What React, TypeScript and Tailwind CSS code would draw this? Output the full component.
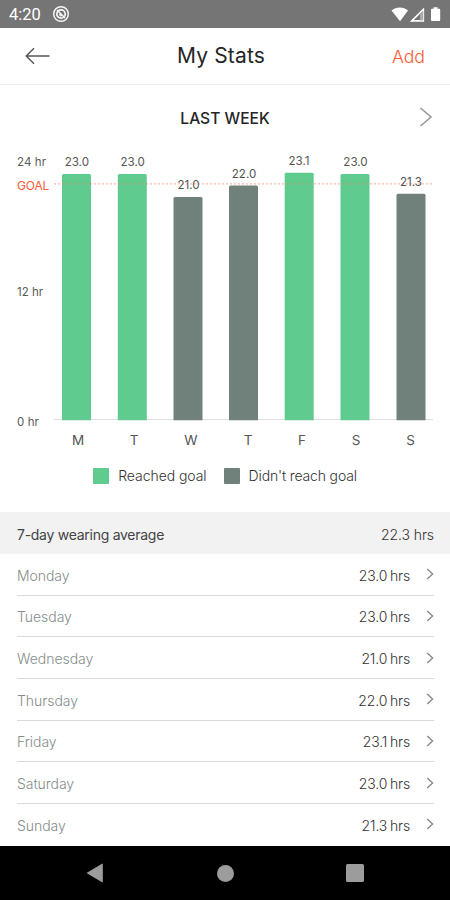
const GREEN = "#5fcb8e";
const GREY = "#70807a";

/* ── Week data ────────────────────────────── */
const days = [
  { name: "Monday", short: "M", hours: "23.0", x: 62, top: 174, labelX: 76.8, dayX: 78 },
  { name: "Tuesday", short: "T", hours: "23.0", x: 117.8, top: 174, labelX: 132.7, dayX: 134 },
  { name: "Wednesday", short: "W", hours: "21.0", x: 173.5, top: 197, labelX: 188.5, dayX: 191 },
  { name: "Thursday", short: "T", hours: "22.0", x: 229, top: 185.5, labelX: 244, dayX: 248 },
  { name: "Friday", short: "F", hours: "23.1", x: 284.7, top: 172.8, labelX: 299, dayX: 302 },
  { name: "Saturday", short: "S", hours: "23.0", x: 340.5, top: 174, labelX: 355.5, dayX: 356 },
  { name: "Sunday", short: "S", hours: "21.3", x: 396.5, top: 193.8, labelX: 411, dayX: 410.5 },
];

function StatusBar() {
  return (
    <div className="flex h-7 items-center justify-between bg-[#757575] pl-[9px] pr-2 text-white">
      <div className="flex items-center gap-[11px]">
        <span className="pt-0.5 font-[Roboto] text-[16.5px] leading-[26px]">4:20</span>
        <svg width="18" height="18" viewBox="0 0 18 18" fill="none" stroke="#f5f5f5">
          <circle cx="9" cy="9" r="7.3" strokeWidth="1.5" />
          <circle cx="9" cy="9" r="4.2" strokeWidth="1.7" />
          <path d="M5 5l8 8M7.3 9.3l2 2" strokeWidth="1.5" />
        </svg>
      </div>
      <svg width="52" height="18" viewBox="0 0 52 18" fill="#fff">
        <path d="M1.5 5.5C6 1.6 13.5 1.6 18 5.5L10 16.2z" />
        <path d="M33.3 4.5v11.3H21.8z" fill="none" stroke="#fff" strokeWidth="1.7" />
        <path d="M30 9v6.5h3.3V5.5z" fill="#aaa" />
        <path d="M43.6 2.3h4v1.5h1.6q1 0 1 1v10q0 1.3-1 1.3h-7.2q-1 0-1-1.3v-10q0-1 1-1h1.6z" />
      </svg>
    </div>
  );
}

function Header() {
  return (
    <header className="grid h-[57px] grid-cols-[1fr_auto_1fr] items-center border-b border-[#eeeeee] pl-[25px] pr-[25px]">
      <svg width="26" height="18" viewBox="0 0 26 18" fill="none" stroke="#555" strokeWidth="1.4">
        <path d="M24.5 9H1.5M9 1.2L1.2 9 9 16.8" />
      </svg>
      <h1 className="mr-2 whitespace-nowrap text-[21px] tracking-[0.15px] text-[#252525]">My Stats</h1>
      <button className="pt-0.5 text-right text-[17.7px] font-light text-[#fb5a35]">Add</button>
    </header>
  );
}

function Chart() {
  return (
    <svg width="450" height="310" viewBox="0 140 450 310" className="block">
      <path d="M54 419.5h379" stroke="#dedede" strokeWidth="1" />
      {days.map((d) => (
        <path
          key={d.name}
          d={`M${d.x} 420.3V${d.top + 1.5}q0-1.5 1.5-1.5h26q1.5 0 1.5 1.5V420.3z`}
          fill={Number(d.hours) > 22 ? GREEN : GREY}
        />
      ))}
      <path d="M54 183.8h380" stroke="#f8735d" strokeOpacity="0.5" strokeWidth="1.2" strokeDasharray="2 2" />
      <g fontSize="11.5" fill="#5a5a5a">
        <text x="17" y="165.5" letterSpacing="0.1">24 hr</text>
        <text x="17" y="190.2" fill="#fb5a35" fontSize="12" letterSpacing="-0.15">GOAL</text>
        <text x="17" y="295.5">12 hr</text>
        <text x="17" y="425.7" letterSpacing="0.1">0 hr</text>
      </g>
      {days.map((d) => (
        <g key={d.name} textAnchor="middle" fill="#555">
          <text x={d.labelX} y={d.top - 8} fontSize="11.6">{d.hours}</text>
          <text x={d.dayX} y="444.7" fontSize="13.5">{d.short}</text>
        </g>
      ))}
    </svg>
  );
}

function Legend() {
  return (
    <div className="flex h-[51px] items-center justify-center text-[14px] font-light text-[#333]">
      <span className="size-4 rounded-[1px] bg-[#5fcb8e]" />
      <span className="ml-[9px] tracking-[-0.05px]">Reached goal</span>
      <span className="ml-[17px] size-4 rounded-[1px] bg-[#70807a]" />
      <span className="ml-[9px] tracking-[-0.15px]">Didn't reach goal</span>
    </div>
  );
}

function DayList() {
  return (
    <ul className="h-[292px] overflow-hidden pl-[17px] pr-4">
      {days.map((d) => (
        <li
          key={d.name}
          className="flex h-[41.67px] items-center border-b border-[#dadada] pt-0.5 text-[14px] font-light last:border-transparent"
        >
          <span className="tracking-[-0.05px] text-[#858d8a]">{d.name}</span>
          <span className="ml-auto tracking-[-0.15px] text-[#333] [word-spacing:-1px]">{d.hours} hrs</span>
          <svg width="8" height="12" viewBox="0 0 8 12" className="mb-0.5 ml-4" fill="none" stroke="#858585" strokeWidth="1.3">
            <path d="M1.2 1L6.6 6l-5.4 5" />
          </svg>
        </li>
      ))}
    </ul>
  );
}

function NavBar() {
  return (
    <nav className="flex h-[54px] items-center justify-between bg-black px-[86px]">
      <svg width="18" height="20" viewBox="0 0 18 20" fill="#9c9c9c">
        <path d="M0.5 10L16 0.7q0.8-0.4 0.8 0.5v17.6q0 0.9-0.8 0.5z" />
      </svg>
      <span className="size-[17px] rounded-full bg-[#9c9c9c]" />
      <span className="size-[18px] rounded-[1.5px] bg-[#9c9c9c]" />
    </nav>
  );
}

export default function App() {
  return (
    <div className="flex h-[900px] w-[450px] flex-col overflow-hidden bg-white font-['Inter','Liberation_Sans',sans-serif]">
      <StatusBar />
      <Header />
      <div className="grid h-[55px] grid-cols-[1fr_auto_1fr] items-center pl-[17px] pr-[17px] pt-3">
        <span />
        <h2 className="pt-px text-[15.6px] font-medium text-[#252525]">LAST WEEK</h2>
        <svg width="14" height="20" viewBox="0 0 14 20" className="mb-[3px] justify-self-end" fill="none" stroke="#999" strokeWidth="1.6">
          <path d="M1.5 1L12 10 1.5 19" />
        </svg>
      </div>
      <Chart />
      <Legend />
      <div className="mt-[11px] flex h-[42px] items-center justify-between bg-[#f2f2f2] pl-[17px] pr-4 pt-0.5 text-[14px] text-[#444]">
        <span className="tracking-[-0.27px]">7-day wearing average</span>
        <span className="font-light tracking-[-0.1px] text-[#333]">22.3 hrs</span>
      </div>
      <DayList />
      <NavBar />
    </div>
  );
}
